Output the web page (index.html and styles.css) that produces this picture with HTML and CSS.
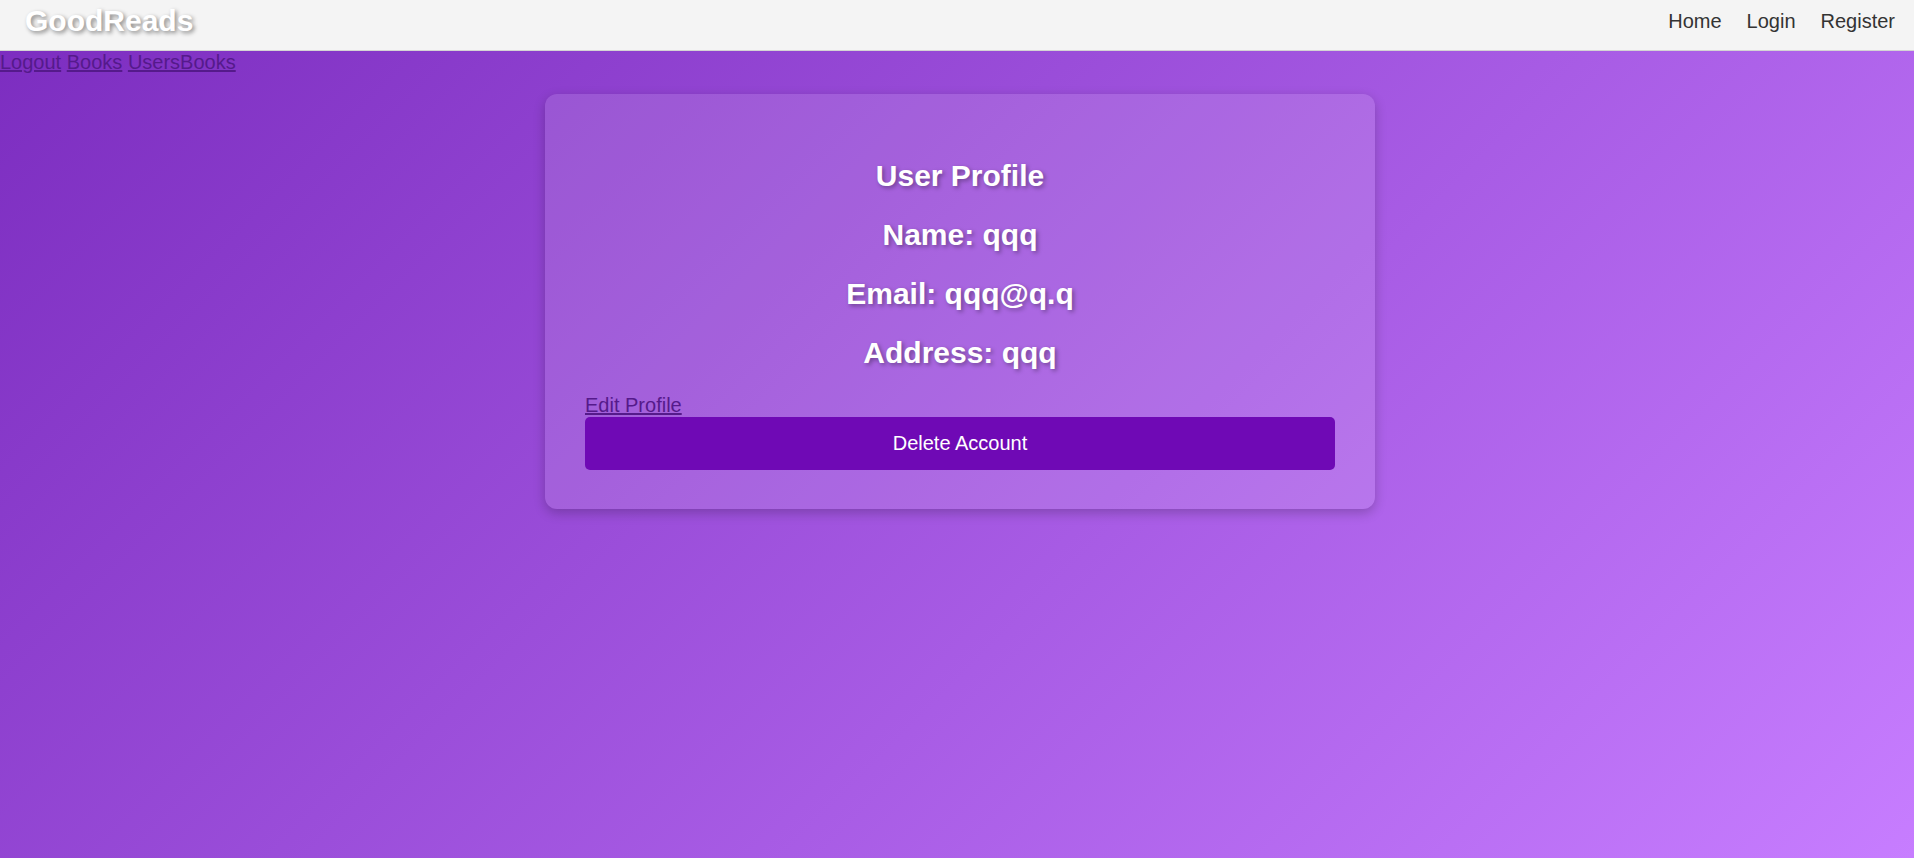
FILE: index.html
```html
<!DOCTYPE html>
<html lang="en">
<head>
<meta charset="utf-8">
<title>GoodReads - User Profile</title>
<link rel="stylesheet" href="styles.css">
</head>
<body>
<nav class="navbar">
  <div class="logo">GoodReads</div>
  <ul class="nav-links">
    <li><a href="#" class="nav-link">Home</a></li>
    <li><a href="#" class="nav-link">Login</a></li>
    <li><a href="#" class="nav-link">Register</a></li>
  </ul>
</nav>
<div class="user-links"><a href="#">Logout</a> <a href="#">Books</a> <a href="#">UsersBooks</a></div>
<main class="profile-card">
  <h2 class="profile-line">User Profile</h2>
  <h2 class="profile-line">Name: qqq</h2>
  <h2 class="profile-line">Email: qqq@q.q</h2>
  <h2 class="profile-line">Address: qqq</h2>
  <a href="#" class="edit-link">Edit Profile</a>
  <button class="delete-btn" type="button">Delete Account</button>
</main>
</body>
</html>
```
FILE: styles.css
```css
html, body {
  margin: 0;
  padding: 0;
}

body {
  font-family: "Liberation Sans", Arial, sans-serif;
  font-size: 20px;
  min-height: 100vh;
  background: linear-gradient(135deg, #7b2cbf 0%, #c77dff 100%);
  background-attachment: fixed;
}

.navbar {
  display: flex;
  align-items: center;
  justify-content: space-between;
  height: 42px;
  padding: 0 19px 8px 25px;
  background: #f4f4f4;
  border-bottom: 1px solid #d4d4d4;
}

.logo {
  font-size: 30px;
  font-weight: bold;
  color: #ffffff;
  text-shadow: 2px 2px 4px rgba(0, 0, 0, 0.45);
}

.nav-links {
  display: flex;
  gap: 25px;
  list-style: none;
  margin: 0;
  padding: 0;
}

.nav-link {
  color: #333333;
  text-decoration: none;
}

.user-links {
  line-height: 23px;
}

.user-links a,
.edit-link {
  color: #551a8b;
}

.profile-card {
  width: 750px;
  margin: 20px auto 0;
  padding: 40px 40px 39px;
  border-radius: 12px;
  background: rgba(255, 255, 255, 0.12);
  box-shadow: 0 4px 12px rgba(0, 0, 0, 0.22);
  position: relative;
  left: 3px;
}

.profile-line {
  margin: 0.83em 0;
  font-size: 30px;
  font-weight: bold;
  text-align: center;
  color: #ffffff;
  text-shadow: 2px 2px 4px rgba(0, 0, 0, 0.35);
}

.edit-link {
  display: inline-block;
  line-height: 23px;
}

.delete-btn {
  display: block;
  width: 100%;
  padding: 15px;
  border: none;
  border-radius: 5px;
  background: #6f09b5;
  color: #ffffff;
  font-family: "Liberation Sans", Arial, sans-serif;
  font-size: 20px;
  line-height: 23px;
}
```
